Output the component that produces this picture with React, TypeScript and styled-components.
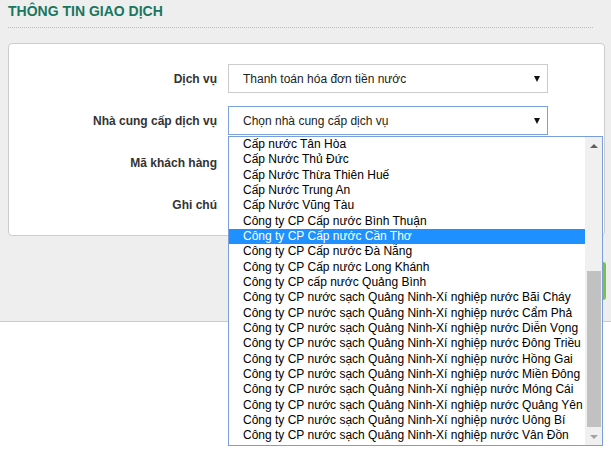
import styled, { createGlobalStyle } from "styled-components";

const providers = [
  "Cấp nước Tân Hòa",
  "Cấp Nước Thủ Đức",
  "Cấp Nước Thừa Thiên Huế",
  "Cấp Nước Trung An",
  "Cấp Nước Vũng Tàu",
  "Công ty CP Cấp nước Bình Thuận",
  "Công ty CP Cấp nước Cần Thơ",
  "Công ty CP Cấp nước Đà Nẵng",
  "Công ty CP Cấp nước Long Khánh",
  "Công ty CP cấp nước Quảng Bình",
  "Công ty CP nước sạch Quảng Ninh-Xí nghiệp nước Bãi Cháy",
  "Công ty CP nước sạch Quảng Ninh-Xí nghiệp nước Cẩm Phả",
  "Công ty CP nước sạch Quảng Ninh-Xí nghiệp nước Diễn Vọng",
  "Công ty CP nước sạch Quảng Ninh-Xí nghiệp nước Đông Triều",
  "Công ty CP nước sạch Quảng Ninh-Xí nghiệp nước Hồng Gai",
  "Công ty CP nước sạch Quảng Ninh-Xí nghiệp nước Miền Đông",
  "Công ty CP nước sạch Quảng Ninh-Xí nghiệp nước Móng Cái",
  "Công ty CP nước sạch Quảng Ninh-Xí nghiệp nước Quảng Yên",
  "Công ty CP nước sạch Quảng Ninh-Xí nghiệp nước Uông Bí",
  "Công ty CP nước sạch Quảng Ninh-Xí nghiệp nước Vân Đồn",
];

const selected = "Công ty CP Cấp nước Cần Thơ";

export default function App() {
  return (
    <>
      <GlobalStyle />
      <Page>
        <Title>THÔNG TIN GIAO DỊCH</Title>
        <Card>
          <Row>
            <Label>Dịch vụ</Label>
            <Select>
              <span>Thanh toán hóa đơn tiền nước</span>
              <Caret />
            </Select>
          </Row>
          <Row>
            <Label>Nhà cung cấp dịch vụ</Label>
            <SelectWrap>
              <Select $focused>
                <span>Chọn nhà cung cấp dịch vụ</span>
                <Caret />
              </Select>
              <Listbox>
                <Options>
                  {providers.map((p) => (
                    <Option key={p} $selected={p === selected}>
                      {p}
                    </Option>
                  ))}
                </Options>
                <Scrollbar>
                  <ScrollArrow $up />
                  <Track>
                    <Thumb />
                  </Track>
                  <ScrollArrow $disabled />
                </Scrollbar>
              </Listbox>
            </SelectWrap>
          </Row>
          <Row>
            <Label>Mã khách hàng</Label>
            <Input />
          </Row>
          <Row>
            <Label>Ghi chú</Label>
            <Input />
          </Row>
        </Card>
        <Actions>
          <SubmitButton>Tiếp tục</SubmitButton>
        </Actions>
      </Page>
      <Footer />
    </>
  );
}

const GlobalStyle = createGlobalStyle`
  html, body {
    margin: 0;
    padding: 0;
    background: #fff;
    font-family: "Liberation Sans", Arial, sans-serif;
  }
`;

const Page = styled.div`
  background: #eeeeee;
  border-bottom: 1px solid #cccccc;
  padding: 1px 6px 0 8px;
`;

const Title = styled.h2`
  margin: 0 12px 0 0;
  padding-bottom: 6px;
  border-bottom: 1px dotted #bbbbbb;
  font-size: 14px;
  line-height: 20px;
  font-weight: bold;
  color: #18775e;
`;

const Card = styled.div`
  margin-top: 15px;
  background: #fff;
  border: 1px solid #cccccc;
  border-radius: 4px;
  padding: 20px 0 16px;
  display: flex;
  flex-direction: column;
  gap: 13px;
`;

const Row = styled.div`
  display: grid;
  grid-template-columns: 208px 320px;
  column-gap: 11px;
  align-items: center;
`;

const Label = styled.label`
  text-align: right;
  font-size: 12px;
  font-weight: bold;
  color: #333333;
`;

const SelectWrap = styled.div`
  position: relative;
`;

const Select = styled.div<{ $focused?: boolean }>`
  box-sizing: border-box;
  height: 29px;
  display: flex;
  align-items: center;
  justify-content: space-between;
  padding: 0 7px 0 14px;
  background: #fff;
  border: 1px solid ${({ $focused }) => ($focused ? "#7da2e0" : "#cccccc")};
  font-size: 12px;
  color: #222222;
`;

const Caret = styled.i`
  width: 0;
  height: 0;
  border-left: 3px solid transparent;
  border-right: 3px solid transparent;
  border-top: 6px solid #111;
`;

const Input = styled.div`
  box-sizing: border-box;
  height: 29px;
  background: #fff;
  border: 1px solid #cccccc;
`;

const Listbox = styled.div`
  position: absolute;
  z-index: 10;
  top: calc(100% + 1px);
  left: 0;
  box-sizing: border-box;
  width: 375px;
  height: 310px;
  background: #fff;
  border: 1px solid #7a9ddb;
  display: flex;
  overflow: hidden;
`;

const Options = styled.ul`
  flex: 1;
  min-width: 0;
  margin: 0;
  padding: 0;
  list-style: none;
`;

const Option = styled.li<{ $selected?: boolean }>`
  height: 15.33px;
  line-height: 15.33px;
  padding-left: 14px;
  font-size: 12px;
  white-space: nowrap;
  overflow: hidden;
  color: ${({ $selected }) => ($selected ? "#fff" : "#000")};
  background: ${({ $selected }) => ($selected ? "#1e90ff" : "transparent")};
`;

const Scrollbar = styled.div`
  flex: 0 0 17px;
  background: #f0f0f0;
  display: flex;
  flex-direction: column;
`;

const ScrollArrow = styled.div<{ $up?: boolean; $disabled?: boolean }>`
  height: 17px;
  display: flex;
  align-items: center;
  justify-content: center;
  &::before {
    content: "";
    width: 0;
    height: 0;
    border-left: 4px solid transparent;
    border-right: 4px solid transparent;
    ${({ $up, $disabled }) =>
      $up
        ? `border-bottom: 4px solid ${$disabled ? "#a3a3a3" : "#606060"};`
        : `border-top: 4px solid ${$disabled ? "#a3a3a3" : "#606060"};`}
  }
`;

const Track = styled.div`
  flex: 1;
  display: flex;
  flex-direction: column;
  justify-content: flex-end;
  padding: 0 1px 1px 2px;
`;

const Thumb = styled.div`
  height: 156px;
  background: #c1c1c1;
`;

const Actions = styled.div`
  display: flex;
  justify-content: flex-end;
  margin-right: -1px;
  padding: 26px 0 21px;
`;

const SubmitButton = styled.button`
  height: 38px;
  width: 120px;
  border: none;
  border-radius: 3px;
  background: #7fc241;
  color: #fff;
  font-family: inherit;
  font-size: 14px;
  font-weight: bold;
`;

const Footer = styled.div`
  height: 130px;
  background: #fff;
`;
